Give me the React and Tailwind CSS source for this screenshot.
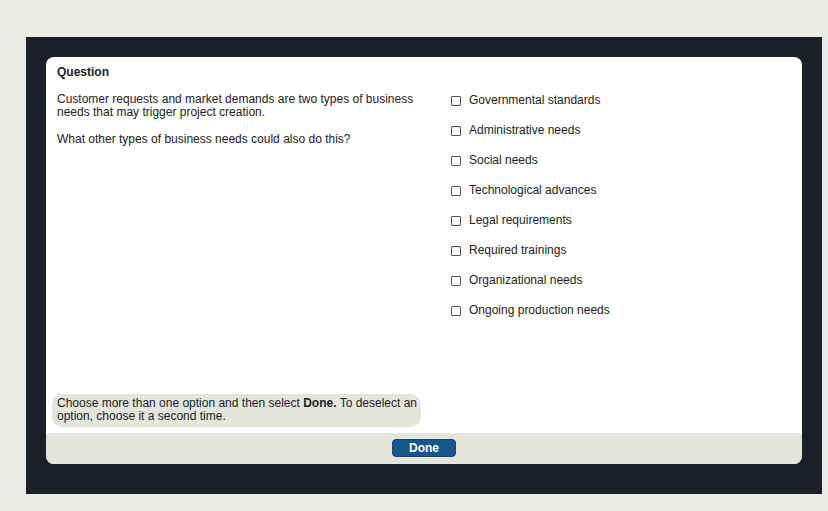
const options = [
  'Governmental standards',
  'Administrative needs',
  'Social needs',
  'Technological advances',
  'Legal requirements',
  'Required trainings',
  'Organizational needs',
  'Ongoing production needs',
]

export default function App() {
  return (
    <div
      className="w-[828px] h-[511px] bg-[#ecece6] pt-[37px] pl-[26px] text-[12px] text-[#222]"
      style={{ fontFamily: '"Liberation Sans", Arial, sans-serif' }}
    >
      <div className="w-[796px] h-[457px] bg-[#1c1f27] pt-[20px] pl-[20px]">
        <div className="w-[756px] h-[407px] bg-white rounded-lg overflow-hidden flex flex-col">
          <div className="flex-1 flex flex-col">
            <div className="px-[11px] pt-[8px]">
              <div className="font-bold leading-[14px]">Question</div>
              <div className="flex mt-[13px]">
                <div className="w-[384px] leading-[13px] pt-[1px]">
                  <p>Customer requests and market demands are two types of business needs that may trigger project creation.</p>
                  <p className="mt-[14px]">What other types of business needs could also do this?</p>
                </div>
                <div className="ml-[10px] flex flex-col gap-[16px] pt-[1px]">
                  {options.map(o => (
                    <label key={o} className="flex items-center h-[14px] cursor-pointer">
                      <span className="w-[10px] h-[10px] border border-[#555] rounded-[1px] mt-[2px] mr-[8px] bg-white" />
                      <span className="leading-[14px]">{o}</span>
                    </label>
                  ))}
                </div>
              </div>
            </div>
            <div className="flex-1" />
            <div className="ml-[6px] mb-[6px] w-[369px] bg-[#e4e6dd] rounded-[10px] pl-[5px] pt-[3px] pb-[4px] leading-[13px]">
              Choose more than one option and then select <b>Done.</b> To deselect an option, choose it a second time.
            </div>
          </div>
          <div className="h-[31px] bg-[#e4e6dd] flex justify-center pt-[6px]">
            <button className="w-[64px] h-[18px] bg-[#17578a] border border-[#0f4470] rounded-[4px] text-white font-bold text-[12px] leading-[16px]">
              Done
            </button>
          </div>
        </div>
      </div>
    </div>
  )
}
